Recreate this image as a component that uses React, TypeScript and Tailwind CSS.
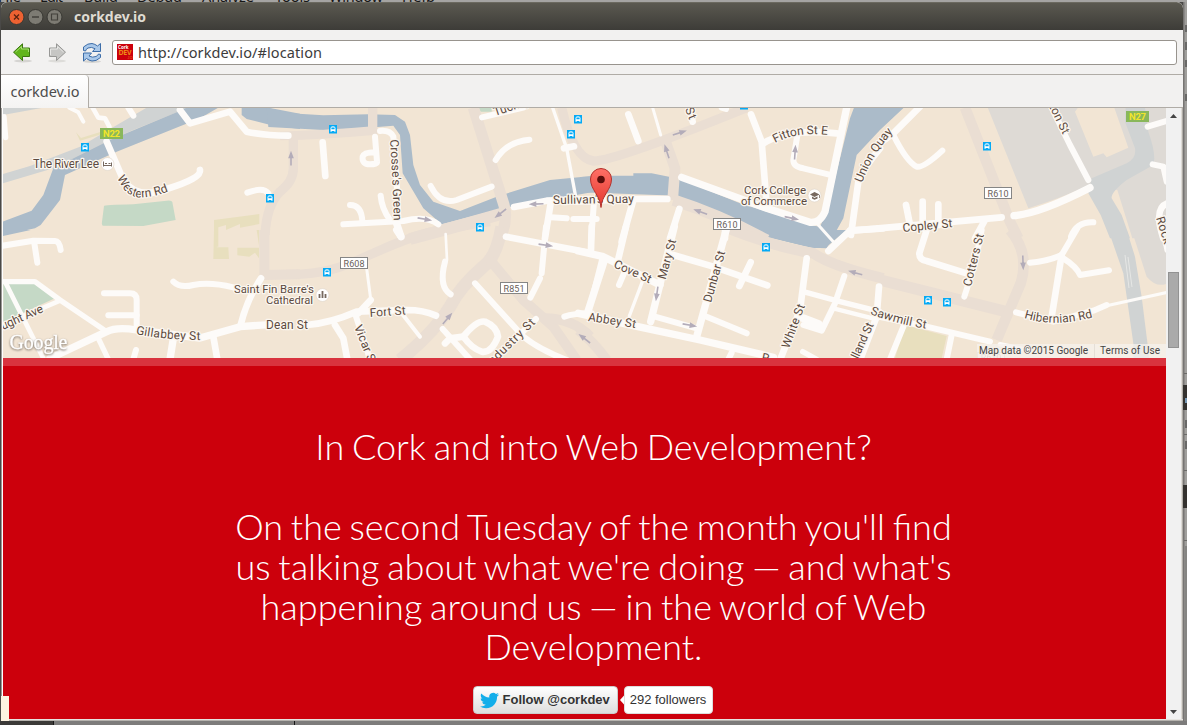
import React from "react";

/* ---------- Map data: each shape is drawn in the 3x grid of its tile ---------- */

const tiles: Record<string, string> = {
  A: "translate(0 105) scale(0.33333)",
  B: "translate(0 230) scale(0.33333)",
  C: "translate(290 105) scale(0.33333)",
  D: "translate(290 230) scale(0.33333)",
  E: "translate(580 105) scale(0.33333)",
  F: "translate(580 230) scale(0.33333)",
  G: "translate(880 105) scale(0.33333)",
  H: "translate(880 230) scale(0.33333)",
};

const water = "#abbbc9";
const rail = "#d0d3d3";
const land = "#f2e5d4";
const built = "#dedad5";
const park = "#c5d9c6";
const olive = "#e8dfbe";

const areas: [string, string, string][] = [
  ["G", built, "M320 0L445 310Q540 280 630 240L712 255L757 400H860V0Z"],
  ["G", land, "M585 20L640 155L670 145L680 157L745 128L700 0H600Z"],
  ["H", built, "M755 0L800 140Q830 175 862 160V0Z"],
  ["A", rail, "M8 235V207L90 183L240 125L320 78L440 8H565L400 75L330 105L160 190Z"],
  ["A", rail, "M8 30L130 8H8Z"],
  ["A", water, "M530 22L330 105L160 190L130 270L95 317L8 350V391L105 370L122 360L180 285L195 210L350 140L600 40L655 8H560Z"],
  ["B", water, "M8 18L92 0H8Z"],
  ["A", water, "M725 8V30L740 42L820 62L900 72V26L805 8Z"],
  ["C", water, "M-70 8L0 25L100 31L235 28L315 30L345 50L360 90L370 180L390 240L430 290L510 318L620 275L780 225L905 213V262L630 312L455 358L400 310L338 205L330 90L310 62L235 68L100 75L-65 66Z"],
  ["E", water, "M0 216L100 212H160V205H215L300 222L480 295L690 360L720 365L745 310L770 200L810 40L825 0H980L900 75L830 150L790 340L740 430L700 428L600 405L500 385L400 330L293 272L0 262Z"],
  ["F", water, "M500 0L600 30L700 55L740 50L800 0Z"],
  ["A", park, "M312 303Q310 300 400 298L500 287Q515 285 517 291L527 345L430 363L308 362Q304 358 306 350Z"],
  ["B", park, "M10 160H100L165 205L10 275Z"],
  ["C", park, "M565 8H605V20H572Z"],
  ["A", olive, "M642 345L778 327V357L720 368V357L678 375V360L655 367V425H642Z"],
  ["B", olive, "M642 0H652L650 52H685L687 87H640ZM712 53H777V85L765 68L748 80L712 76ZM770 0H778V53Z"],
  ["A", olive, "M228 82L240 107L325 82L330 60L320 75L243 99Z"],
  ["H", olive, "M75 285L200 318L185 385H45Z"],
  ["G", rail, "M735 50L765 130Q770 160 740 175L635 220L625 265L662 330L690 400H750L725 330L695 280Q692 262 740 225L820 180Q830 150 805 80L795 8H737Z"],
  ["H", rail, "M685 0L730 130L760 340V385H808L785 200L765 80L740 0Z"],
];

const mainRoads: [string, number, string][] = [
  ["A", 28, "M880 80V190Q880 230 840 260Q800 300 795 390"],
  ["B", 30, "M793 0V135L900 133"],
  ["D", 28, "M-10 133C120 135 180 100 250 70C380 10 430 0 600 -25"],
  ["C", 36, "M360 402Q520 360 640 325"],
  ["C", 26, "M-30 93Q100 90 250 77"],
  ["C", 28, "M248 8V90"],
  ["C", 34, "M550 8L642 300Q655 345 630 400"],
  ["D", 38, "M635 -10Q620 80 580 110Q510 170 480 230Q430 310 330 390"],
  ["D", 30, "M600 90L700 210L790 290L860 390"],
  ["D", 30, "M760 265Q850 265 900 320"],
  ["F", 30, "M-5 300Q40 335 80 390"],
  ["E", 28, "M-55 8Q-20 160 40 168Q100 170 500 8"],
  ["E", 32, "M255 105L285 190L278 285"],
  ["E", 34, "M280 285Q420 330 560 405"],
  ["F", 32, "M430 -10Q580 50 700 70Q760 110 910 145"],
  ["H", 34, "M0 150L380 245"],
  ["G", 32, "M255 8L390 350L415 400"],
  ["H", 32, "M390 0Q450 70 422 160L350 330"],
];

const streets: [string, number, string][] = [
  ["A", 16, "M12 35L17 98"], ["A", 12, "M208 8L235 22L250 50"], ["A", 14, "M278 8L295 38L315 40L328 65"],
  ["A", 18, "M385 8L400 32"], ["A", 20, "M540 15L570 55L690 20L740 80Q790 92 865 92"],
  ["A", 20, "M320 110L370 225Q410 285 500 252Q605 220 600 195"], ["A", 18, "M742 263Q790 245 805 265"],
  ["B", 18, "M8 47L100 32L165 33Q178 33 182 60"], ["B", 18, "M103 40L112 98"],
  ["B", 16, "M8 155H105L180 210L320 305"], ["B", 14, "M15 155L130 385"], ["B", 14, "M8 285L180 212"],
  ["B", 22, "M150 385L320 305Q350 290 410 300L600 324L720 290L820 283"],
  ["B", 18, "M312 190H390Q410 190 410 210V290"], ["B", 18, "M325 256H410"], ["B", 16, "M295 325L325 388"],
  ["B", 22, "M520 325L510 388"], ["B", 20, "M640 320L652 388"], ["B", 18, "M408 360L400 388"],
  ["B", 18, "M520 155Q540 175 580 165Q630 155 700 172"], ["B", 20, "M783 145Q740 210 722 285"],
  ["C", 20, "M98 112L106 213"], ["C", 18, "M255 95L261 170Q262 178 240 178Q215 178 218 155Q222 142 255 142"],
  ["C", 18, "M270 78Q300 75 310 95Q320 200 325 350"], ["C", 18, "M180 300Q215 300 217 350"],
  ["C", 18, "M160 358L340 348Q410 330 445 358"], ["C", 18, "M272 272Q275 310 300 345"],
  ["C", 22, "M318 350L333 395"], ["C", 18, "M422 243Q450 300 500 285L605 245"],
  ["C", 18, "M617 165Q650 110 718 104"], ["C", 18, "M576 37L700 8"], ["C", 10, "M788 8L830 130L858 280"],
  ["C", 20, "M822 130L852 124"], ["C", 20, "M672 306L770 287L900 282"], ["C", 20, "M782 295L765 400"],
  ["C", 18, "M782 337L830 340M850 342H920"],
  ["D", 8, "M467 12L471 90"], ["D", 18, "M465 95Q445 170 482 193"], ["D", 20, "M648 20L900 68"],
  ["D", 18, "M768 -10L755 130"], ["D", 18, "M750 145L721 203"], ["D", 22, "M320 0L332 18"],
  ["D", 9, "M230 115L243 215"], ["D", 20, "M242 210L205 250"],
  ["D", 20, "M50 285Q120 280 200 245L350 240Q400 240 438 257"], ["D", 20, "M135 285L160 325L172 388"],
  ["D", 18, "M195 250L240 388"], ["D", 12, "M335 250L390 320"], ["D", 18, "M555 160L700 320Q750 360 830 390"],
  ["D", 18, "M458 297L540 388"], ["D", 20, "M520 320Q560 270 585 275Q620 290 624 320Q605 370 575 365Q545 355 520 320Z"],
  ["D", 20, "M465 340L480 325L520 320"], ["D", 18, "M600 400L738 267"], ["D", 18, "M823 260Q850 250 905 250"],
  ["D", 16, "M893 255L935 90"],
  ["E", 20, "M145 28L175 108"], ["E", 9, "M218 8L242 90"], ["E", 20, "M328 8L338 50"], ["E", 18, "M425 8L438 12"],
  ["E", 20, "M513 28L545 110L560 300"], ["E", 20, "M550 115Q620 70 770 85"],
  ["E", 18, "M653 85L640 165Q640 185 670 190L745 208"],
  ["E", 22, "M305 217L560 310L690 352Q720 355 735 320L800 8"], ["E", 20, "M-20 290L160 282H262"],
  ["E", 18, "M42 290L33 410"], ["E", 20, "M160 285L125 410"], ["E", 20, "M298 312L270 400"], ["E", 20, "M435 375V400"],
  ["E", 20, "M813 390L835 230Q850 190 900 130"], ["G", 20, "M-5 118L40 85L120 5"],
  ["G", 18, "M40 90Q80 170 110 185Q130 190 187 137"], ["E", 9, "M715 360L760 410"], ["F", 20, "M745 63L810 2L900 -5"],
  ["E", 20, "M810 377L910 370"], ["G", 20, "M-5 370L365 337"], ["G", 22, "M402 332Q480 325 630 248"],
  ["G", 20, "M78 300L90 360M128 290V370M175 298V360"], ["G", 20, "M315 345L285 400"],
  ["G", 18, "M573 395Q590 350 640 352"], ["G", 18, "M515 8L570 120L625 225"], ["G", 18, "M803 65L870 45"],
  ["G", 18, "M818 178L850 185L860 230"], ["G", 20, "M862 295Q820 310 850 400"],
  ["F", 22, "M-5 63L70 80L240 165"], ["F", 20, "M35 -10L33 60"], ["F", 20, "M138 -10L113 95"], ["F", 18, "M132 130L117 165"],
  ["F", 10, "M187 155L148 258"], ["F", 22, "M75 85L22 250"], ["F", 22, "M283 -10L212 275"],
  ["F", 22, "M-5 250L160 287L360 330L580 382"], ["F", 20, "M280 75L400 110L562 166"], ["F", 20, "M512 97L478 168"],
  ["F", 22, "M440 -5L350 320"], ["F", 18, "M225 260L350 295"], ["F", 18, "M380 260L500 310"],
  ["F", 20, "M680 85L660 240L600 390"], ["F", 16, "M670 185L780 215L900 245"], ["F", 18, "M793 138L765 220L725 302L670 285"],
  ["F", 13, "M760 235L890 268"], ["F", 24, "M670 265L715 282"], ["F", 20, "M897 170L890 260L840 390"],
  ["F", 16, "M668 365L710 388"], ["F", 18, "M455 368L445 388"],
  ["H", 20, "M140 0L118 70Q118 90 140 93L260 130"], ["H", 18, "M305 0L285 100L253 200"],
  ["H", 18, "M450 98Q500 95 545 75L592 -5"], ["H", 20, "M545 75L515 260"], ["H", 18, "M550 85Q590 110 600 135L687 121"],
  ["H", 18, "M408 247L520 275L640 242L680 225"], ["H", 9, "M680 227L862 187"], ["H", 18, "M-5 260L140 290L330 335"],
  ["H", 18, "M70 290L30 388"], ["H", 18, "M215 315L200 388"], ["H", 14, "M360 343L440 360"],
  ["H", 18, "M850 0L862 60"],
];

/* text, baseline path, rendered length, font size */
const labels: [string, string, number, number][] = [
  ["Western Rd", "M117 178L123 188Q130 198 143 197.500Q157 196.500 172 190", 61, 12],
  ["The River Lee", "M33 168H110", 66, 12],
  ["Gillabbey St", "M136 334Q165 340 202 340", 65, 12],
  ["ught Ave", "M3 330L50 309", 45, 12],
  ["Saint Fin Barre's", "M234 293H330", 80, 11.5],
  ["Cathedral", "M266 304H320", 47, 11.5],
  ["Dean St", "M266 329H320", 42, 12],
  ["Fort St", "M370 317L412 314", 36, 12],
  ["Vicar St", "M354 327Q361 345 372 370", 43, 12],
  ["Crosse's Green", "M390 140Q393 182 394 230", 81, 12],
  ["Tuckey St", "M495 116L550 98", 52, 12],
  ["Sullivan's Quay", "M553 204L650 202.5", 81, 12],
  ["Industry St", "M490 368L540 319", 64, 12],
  ["Cove St", "M613 267L655 286", 40, 12],
  ["Abbey St", "M588 321Q612 324 640 329", 48, 12],
  ["Mary St", "M665.5 280L677 238", 41, 12],
  ["Dunbar St", "M711 303L726 250", 53, 12],
  ["White St", "M789 349L805 306", 46, 12],
  ["Holland St", "M852 373L876 320", 53, 12],
  ["St", "M685 109L690 122", 12, 12],
  ["Fitton St E", "M775 143Q797 131 828 135", 54, 12],
  ["Union Quay", "M862 183Q873 153 894 131", 60, 12],
  ["Cork College", "M744 194H820", 62, 11.5],
  ["of Commerce", "M741 205H820", 66, 11.5],
  ["Copley St", "M903 232L955 227", 50, 12],
  ["Clifton St", "M1041 90L1064 137", 50, 12],
  ["Cotters St", "M971 287L984 234", 54, 12],
  ["Sawmill St", "M870 314Q896 324 928 329", 58, 12],
  ["Hibernian Rd", "M1024 318Q1055 328 1094 317", 70, 12],
  ["Rock", "M1156 218L1166 250", 28, 12],
  ["R", "M761 361L770 363", 8, 12],
];

const busStops = [
  [85, 147], [333, 129], [270, 198], [327, 272], [480, 227], [578, 119], [571, 134],
  [744, 105], [766, 247], [987, 146], [928, 300], [947, 302],
];

const routes: [string, number, number][] = [
  ["R608", 354, 263], ["R851", 514, 288], ["R610", 727, 224], ["R610", 998, 193],
];

/* x, y, rotation in degrees */
const arrows = [
  [291, 159, -90], [424, 219, 10], [447, 319, -50], [537, 204, 178], [501, 213, 142], [545, 245, 8],
  [679, 133, -17], [667, 152, -108], [795, 153, -86], [791, 218, 12], [701, 212, -160], [657, 293, 98],
  [689, 325, 10], [585, 339, -142], [856, 273, -164], [1023, 262, 88],
];

function CityMap() {
  return (
    <svg viewBox="3 108 1163 250" className="block h-[250px] w-[1163px] bg-[#f2e5d4] font-['Roboto',sans-serif]">
      {areas.map(([t, fill, d], i) => <path key={i} transform={tiles[t]} d={d} fill={fill} />)}
      <g fill="none" stroke="#eaded3" strokeLinejoin="round">
        {mainRoads.map(([t, w, d], i) => <path key={i} transform={tiles[t]} d={d} strokeWidth={w} />)}
      </g>
      <g fill="none" stroke="#fdfbf9" strokeLinejoin="round" strokeLinecap="round">
        {streets.map(([t, w, d], i) => <path key={i} transform={tiles[t]} d={d} strokeWidth={w} />)}
      </g>
      <path d="M1125 255l4 33M1128 257l4 30" stroke="#e6e7e5" fill="none" />
      {arrows.map(([x, y, r], i) => (
        <path key={i} transform={`translate(${x} ${y}) rotate(${r})`} d="M-6.5 0H3M1.5-1.7L6 0L1.5 1.7Z" stroke="#b3acb9" fill="#b3acb9" strokeWidth="1.6" />
      ))}
      {routes.map(([name, x, y], i) => (
        <g key={i}>
          <rect x={x - 13.5} y={y - 5.5} width="27" height="11" fill="#fff" stroke="#858585" />
          <text x={x} y={y + 3.7} fontSize="9" textAnchor="middle" textLength="21" fill="#6a6059">{name}</text>
        </g>
      ))}
      <g opacity="0.3">
        <rect x="977.5" y="352.5" width="27" height="11" fill="#fff" stroke="#858585" />
        <text x="991" y="361" fontSize="9" textAnchor="middle">R610</text>
      </g>
      {[["N22", 111.5, 133.5], ["N27", 1137.5, 116.5]].map(([name, x, y]) => (
        <g key={name}>
          <rect x={+x - 11.5} y={+y - 5.5} width="23" height="11" fill="#89b75b" />
          <text x={x} y={+y + 3.5} fontSize="9.5" fontWeight="700" textAnchor="middle" textLength="17" fill="#f2e52a">{name}</text>
        </g>
      ))}
      {[[107.5, 164], [322.5, 295], [814.5, 195.5]].map(([x, y]) => <circle key={x} cx={x} cy={y} r="6.5" fill="#fff" stroke="#ddd3c7" strokeWidth=".6" />)}
      <path d="M103.5 161.500v5M111.500 162.500v4M103.500 165.500h8M105 163.500h2M108.500 163.500h2" stroke="#77695f" fill="none" />
      <path d="M319.5 298v-4M322.500 298v-7M325.500 298v-4" stroke="#77695f" strokeWidth="1.8" fill="none" />
      <path d="M810 194.500l4.500-2.500 5 2.500-5 2.500ZM812 196.500v2l2.500 1.300 3-1.300v-2l-3 1.400ZM819 195h.8v3h-.8Z" fill="#77695f" />
      {busStops.map(([x, y], i) => (
        <g key={i} transform={`translate(${x} ${y})`}>
          <rect x="-4" y="-4" width="8" height="8.500" fill="#05aaf5" />
          <path d="M-2.500 2.800V-1Q-2.500-2.700 0-2.700T2.500-1V2.800H1.300V2H-1.300V2.800Z" fill="#fff" />
          <path d="M-1.600-1.500H1.600V.2H-1.600Z" fill="#05aaf5" />
        </g>
      ))}
      <g fill="#5c4a40" stroke="#fbf6ef" strokeWidth="2.500" strokeLinejoin="round" paintOrder="stroke">
        {labels.map(([text, d, len, size], i) => (
          <React.Fragment key={i}>
            <path id={`label-${i}`} d={d} fill="none" stroke="none" />
            <text fontSize={size} textLength={len}><textPath href={`#label-${i}`} textLength={len}>{text}</textPath></text>
          </React.Fragment>
        ))}
      </g>
      <defs>
        <linearGradient id="pin" x1="0" y1="0" x2="0" y2="1">
          <stop offset="0" stopColor="#ff7066" /><stop offset="1" stopColor="#e4382f" />
        </linearGradient>
      </defs>
      <path d="M601 207.500C600.200 195 590.500 190 590.500 179A10.500 10.500 0 0 1 611.500 179C611.500 190 601.800 195 601 207.500Z" fill="url(#pin)" stroke="#b3312b" />
      <circle cx="601" cy="179.500" r="3.800" fill="#5c0f0b" />
      <text x="9.500" y="348.500" fontSize="20" textLength="58" fontFamily="Liberation Serif, serif" fill="#fff" stroke="#fff" strokeWidth=".3" className="[filter:drop-shadow(0.5px_1px_0.8px_#776e66)]">Google</text>
      <rect x="977" y="344" width="189" height="14" fill="#f5f2ee" opacity=".75" />
      <path d="M1094.500 344v14" stroke="#e5dfd7" />
      <g fontSize="10" fill="#444">
        <text x="979" y="354" textLength="109">Map data ©2015 Google</text>
        <text x="1100" y="354" textLength="60">Terms of Use</text>
      </g>
    </svg>
  );
}

/* ---------- Window chrome ---------- */

function TitleBar() {
  return (
    <div className="flex h-7 items-center rounded-t-md border-t border-[#6b695f] bg-linear-to-b from-[#5b5950] to-[#3d3c38] pl-[7px]">
      <svg width="56" height="18" viewBox="8 7.500 56 18" className="block">
        <circle cx="16.500" cy="16.500" r="7.500" fill="#ee6232" stroke="#3a3934" />
        <path d="M14 14l5 5M19 14l-5 5" stroke="#5b2310" strokeWidth="1.300" />
        <circle cx="35.500" cy="16.500" r="7.500" fill="#7d7b73" stroke="#3a3934" />
        <path d="M32 16.500h7" stroke="#43413b" strokeWidth="1.300" />
        <circle cx="54.500" cy="16.500" r="7.500" fill="#7d7b73" stroke="#3a3934" />
        <path d="M51.500 13.500h6v6h-6Z" fill="none" stroke="#43413b" strokeWidth="1.200" />
      </svg>
      <span className="ml-[10px] text-[14px] leading-none font-bold text-[#dfdbd2]">
        <svg width="74" height="20" className="block"><text x="0" y="15" textLength="72" fontSize="14" fill="#dfdbd2">corkdev.io</text></svg>
      </span>
    </div>
  );
}

function Toolbar() {
  return (
    <div className="flex h-[45px] items-center border-b border-[#b0aca6] bg-[#f2f1f0] pr-[6px] pl-[10px]">
      <svg width="94" height="24" viewBox="11 40 94 24" className="block shrink-0">
        <ellipse cx="23" cy="61" rx="9" ry="1.500" fill="#d5d4d1" />
        <path d="M13.500 52.200L22.500 43.800V48H29.500V56.500H22.500V60.500Z" fill="#62b51c" stroke="#3c7710" strokeLinejoin="round" />
        <path d="M15.500 52L21.500 46.500V49H28.500V52" fill="none" stroke="#a6dd72" />
        <ellipse cx="57" cy="61" rx="9" ry="1.500" fill="#dddcd9" />
        <path d="M65.500 52.200L56.500 43.800V48H49.500V56.500H56.500V60.500Z" fill="#c6c6c4" stroke="#989896" strokeLinejoin="round" />
        <path d="M50.500 55V49H57.500V46.500L63.500 52" fill="none" stroke="#e7e7e5" />
        <ellipse cx="92" cy="61.500" rx="9" ry="1.500" fill="#d5d4d1" />
        <g fill="#a9c8ea" stroke="#3d6da8" strokeLinejoin="round">
          <path d="M83.500 50.500V47Q88 43 92 43.500Q95 44 97.500 46L100.500 43.500V51.500H92.500L95 48.700Q91.500 46.500 88 48Q86 49 85.500 51Z" />
          <path d="M100.500 54.500V57.500Q96 61.500 92 61Q89 60.500 86.500 58.500L83.500 61V53H91.500L89 56Q92.500 58 96 56.500Q98 55.500 98.500 54Z" />
        </g>
      </svg>
      <div className="ml-[7px] flex h-[25px] flex-1 items-center rounded-[3px] border border-[#98948e] bg-white pl-1">
        <svg width="16" height="16" className="block">
          <rect width="16" height="16" fill="#cc000c" />
          <text x="1" y="4.500" fontSize="4.500" fontWeight="700" fill="#fff">Cork</text>
          <text x="1.500" y="11" fontSize="7" textLength="13" fontWeight="700" fill="#ef8a16">DEV</text>
          <text x="10" y="15" fontSize="4" fill="#ef6b16">.IO</text>
        </svg>
        <svg width="190" height="22" className="ml-[5px] block"><text x="0" y="16.500" fontSize="14.500" textLength="184" fill="#3c3c3c">http://corkdev.io/#location</text></svg>
      </div>
    </div>
  );
}

function TabStrip() {
  return (
    <div className="flex h-[33px] border-b border-[#b0aca6] bg-[#f2f1f0]">
      <div className="-mb-px h-[33px] w-[88px] rounded-tr-[4px] border-r border-[#b0aca6] bg-linear-to-b from-white to-[#f4f3f2]">
        <svg width="86" height="32" className="block"><text x="9.500" y="21.500" fontSize="14.500" textLength="69" fill="#4c4c4c">corkdev.io</text></svg>
      </div>
    </div>
  );
}

function Intro() {
  return (
    <section className="flex h-[361px] flex-col items-center border-t-8 border-[#d9333e] bg-[#cc000c] pl-[18px] text-white">
      <div className="mt-[60px] w-[740px] text-center font-['Lato',sans-serif] text-[36px] leading-10 font-light whitespace-nowrap [word-spacing:-2px]">
        <p>In Cork and into Web Development?</p>
        <p className="mt-10">
          On the second Tuesday of the month you'll find<br />
          us talking about what we're doing — and what's<br />
          happening around us — in the world of Web<br />
          Development.
        </p>
      </div>
      <div className="mt-5 mr-[2px] flex h-7 text-[13px] font-['Liberation_Sans',sans-serif] text-[#333]">
        <div className="flex w-[145px] items-center rounded-[4px] border border-[#ccc] bg-linear-to-b from-white to-[#dedede] pl-[6px] font-bold whitespace-nowrap">
          <svg viewBox="0 0 24 24" className="mr-1 h-[19px] w-[19px] shrink-0 fill-[#13aeea]">
            <path d="M23.950 4.570a10 10 0 0 1-2.820.780 4.960 4.960 0 0 0 2.160-2.730c-.950.560-2 .960-3.130 1.190a4.920 4.920 0 0 0-8.380 4.480C7.690 8.090 4.070 6.130 1.640 3.160a4.820 4.820 0 0 0-.670 2.480c0 1.710.870 3.210 2.190 4.100a4.900 4.900 0 0 1-2.230-.620v.060a4.920 4.920 0 0 0 3.950 4.830 5 5 0 0 1-2.210.080 4.940 4.940 0 0 0 4.600 3.420A9.870 9.870 0 0 1 0 19.540a13.990 13.990 0 0 0 7.550 2.210c9.050 0 14-7.500 14-13.980 0-.210 0-.420-.020-.630a9.940 9.940 0 0 0 2.460-2.550z" />
          </svg>
          Follow @corkdev
        </div>
        <svg width="6" height="28" className="block"><path d="M6 9.500L2 14l4 4.500Z" fill="#fff" /></svg>
        <div className="flex w-[89px] items-center justify-center rounded-[4px] border border-[#ddd] bg-white whitespace-nowrap">292 followers</div>
      </div>
    </section>
  );
}

function Scrollbar() {
  return (
    <div className="flex h-[611px] w-[15px] flex-col items-start bg-[#f1f1f1]">
      <svg width="15" height="164" className="block"><path d="M4 10L7.500 6L11 10Z" fill="#444" /></svg>
      <div className="ml-[2px] h-[76px] w-[11px] border border-[#929292] bg-[#aaa]" />
      <svg width="15" height="371" className="block"><path d="M4 362H11L7.500 366Z" fill="#444" /></svg>
    </div>
  );
}

const menu: [string, number, number][] = [
  ["File", -2, 23], ["Edit", 40, 23], ["Build", 84, 34], ["Debug", 137, 45], ["Analyze", 202, 52],
  ["Tools", 275, 35], ["Window", 329, 54], ["Help", 402, 33],
];

export default function App() {
  return (
    <main className="relative flex h-[725px] w-[1187px] flex-col overflow-hidden bg-[#aaa9a6] font-['Noto_Sans','Open_Sans',sans-serif]">
      <svg width="1187" height="2" className="block shrink-0 bg-[#a5a4a2]">
        {menu.map(([name, x, w]) => <text key={name} x={x} y="2" fontSize="14.500" textLength={w} fill="#171717">{name}</text>)}
      </svg>
      <div className="flex h-[719px] shrink-0 bg-[#4a4947]">
        <div className="w-px bg-[#4a4947]" />
        <div className="w-[1182px] overflow-hidden rounded-t-md bg-[#f2f1f0]">
          <TitleBar />
          <Toolbar />
          <TabStrip />
          <div className="flex h-[611px]">
            <div className="flex w-[2px] flex-col border-l border-[#9b9894] bg-white" />
            <div className="w-[1163px]">
              <CityMap />
              <Intro />
            </div>
            <Scrollbar />
            <div className="w-[2px] border-r border-[#b0ada8] bg-[#dedbd6]" />
          </div>
          <div className="h-[2px] border-b border-[#b6b3ae] bg-[#e6e4e0]" />
        </div>
        <svg width="4" height="719" viewBox="1183 2 4 719" className="block bg-[#a09f9c]">
          <rect x="1183" y="2" width="1.500" height="719" fill="#777573" />
          <path d="M1184 373.500h3M1184 434.500h3M1184 470.500h3M1184 540.500h3M1186 546v175" stroke="#6b6a68" />
          <path d="M1183 385h4v25h-4ZM1183 485h4v23h-4Z" fill="#34322f" />
          <path d="M1185 398h2v5h-2Z" fill="#7899b5" />
          <path d="M1186 25v7M1186 42v8M1186 60v7M1186 94v7M1186 420v8M1186 441v8" stroke="#333" />
        </svg>
      </div>
      <svg width="1187" height="4" className="block shrink-0 bg-[#7d7c7b]">
        <path d="M0 0h53v4H0Z" fill="#3b3a38" />
        <path d="M53.500 0v4M294.500 0v4" stroke="#181818" />
      </svg>
      <div className="absolute top-[696px] left-px h-[25px] w-2 bg-[#fdf3e1]" />
    </main>
  );
}
